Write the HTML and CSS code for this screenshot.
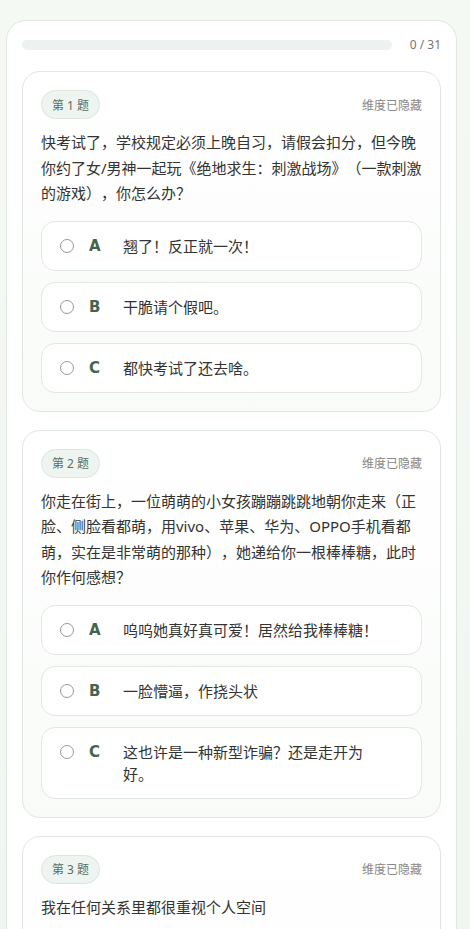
FILE: index.html
```html
<!DOCTYPE html>
<html lang="zh-CN">
<head>
<meta charset="utf-8">
<title>测试</title>
<link rel="stylesheet" href="styles.css">
</head>
<body>
<main class="shell">
  <div class="progress-row">
    <div class="progress-track"><div class="progress-fill" style="width:0%"></div></div>
    <span class="progress-text">0 / 31</span>
  </div>

  <section class="q-card">
    <div class="q-head">
      <span class="q-badge">第 1 题</span>
      <span class="q-dim">维度已隐藏</span>
    </div>
    <p class="q-text">快考试了，学校规定必须上晚自习，请假会扣分，但今晚你约了女/男神一起玩《绝地求生：刺激战场》（一款刺激的游戏），你怎么办？</p>
    <div class="options">
      <label class="option"><span class="radio"></span><span class="letter">A</span><span class="opt-text">翘了！反正就一次！</span></label>
      <label class="option"><span class="radio"></span><span class="letter">B</span><span class="opt-text">干脆请个假吧。</span></label>
      <label class="option"><span class="radio"></span><span class="letter">C</span><span class="opt-text">都快考试了还去啥。</span></label>
    </div>
  </section>

  <section class="q-card">
    <div class="q-head">
      <span class="q-badge">第 2 题</span>
      <span class="q-dim">维度已隐藏</span>
    </div>
    <p class="q-text">你走在街上，一位萌萌的小女孩蹦蹦跳跳地朝你走来（正脸、侧脸看都萌，用vivo、苹果、华为、OPPO手机看都萌，实在是非常萌的那种），她递给你一根棒棒糖，此时你作何感想？</p>
    <div class="options">
      <label class="option"><span class="radio"></span><span class="letter">A</span><span class="opt-text">呜呜她真好真可爱！居然给我棒棒糖！</span></label>
      <label class="option"><span class="radio"></span><span class="letter">B</span><span class="opt-text">一脸懵逼，作挠头状</span></label>
      <label class="option"><span class="radio"></span><span class="letter">C</span><span class="opt-text">这也许是一种新型诈骗？还是走开为好。</span></label>
    </div>
  </section>

  <section class="q-card">
    <div class="q-head">
      <span class="q-badge">第 3 题</span>
      <span class="q-dim">维度已隐藏</span>
    </div>
    <p class="q-text">我在任何关系里都很重视个人空间</p>
    <div class="options">
      <label class="option"><span class="radio"></span><span class="letter">A</span><span class="opt-text">同意</span></label>
      <label class="option"><span class="radio"></span><span class="letter">B</span><span class="opt-text">中立</span></label>
      <label class="option"><span class="radio"></span><span class="letter">C</span><span class="opt-text">不同意</span></label>
    </div>
  </section>
</main>
</body>
</html>
```

FILE: styles.css
```css
* { box-sizing: border-box; }

html, body {
  margin: 0;
  padding: 0;
}

body {
  background: linear-gradient(180deg, #f4f9f4 0%, #eef5ef 100%);
  font-family: "Noto Sans", "Noto Sans CJK SC", sans-serif;
  color: #333;
  padding: 20px 13px 20px 6px;
  text-spacing-trim: space-all;
}

.shell {
  background: #fff;
  border: 1px solid #e0e7e1;
  border-radius: 20px;
  padding: 15px 15px 18px;
  display: flex;
  flex-direction: column;
  gap: 18px;
}

.progress-row {
  display: flex;
  align-items: center;
  gap: 16px;
  height: 18px;
  margin-bottom: -1px;
}

.progress-track {
  flex: 1;
  height: 10px;
  border-radius: 5px;
  background: #edf1ef;
  overflow: hidden;
}

.progress-fill {
  height: 100%;
  background: #5d8a66;
}

.progress-text {
  font-size: 12px;
  color: #777;
  line-height: 18px;
  width: 33px;
  text-align: right;
  white-space: nowrap;
}

.q-card {
  border: 1px solid #e0e7e2;
  border-radius: 18px;
  background: linear-gradient(180deg, #ffffff 0%, #f8fbf8 100%);
  padding: 18px;
}

.q-head {
  display: flex;
  align-items: center;
  justify-content: space-between;
}

.q-badge {
  display: inline-flex;
  align-items: center;
  height: 29px;
  padding: 0 10px;
  border-radius: 15px;
  background: #eef4ef;
  border: 1px solid #dce6de;
  font-size: 12px;
  color: #5b6e60;
  white-space: nowrap;
}

.q-dim {
  font-size: 12px;
  color: #888;
}

.q-text {
  margin: 11px 0 14px;
  font-size: 15px;
  line-height: 25.5px;
  color: #333;
}

.options {
  display: flex;
  flex-direction: column;
  gap: 11px;
}

.option {
  display: flex;
  align-items: flex-start;
  border: 1px solid #e1e8e3;
  border-radius: 14px;
  background: #fff;
  padding: 13px 36px 13px 18px;
  cursor: pointer;
}

.radio {
  flex: none;
  width: 14px;
  height: 14px;
  margin-top: 4px;
  border: 1.5px solid #999;
  border-radius: 50%;
  background: #fff;
}

.letter {
  flex: none;
  width: 20px;
  margin-left: 15px;
  margin-right: 14px;
  font-family: "DejaVu Sans", "Noto Sans", sans-serif;
  font-weight: bold;
  font-size: 15px;
  line-height: 22px;
  color: #46634c;
}

.opt-text {
  font-size: 15px;
  line-height: 22px;
  color: #333;
}
```
